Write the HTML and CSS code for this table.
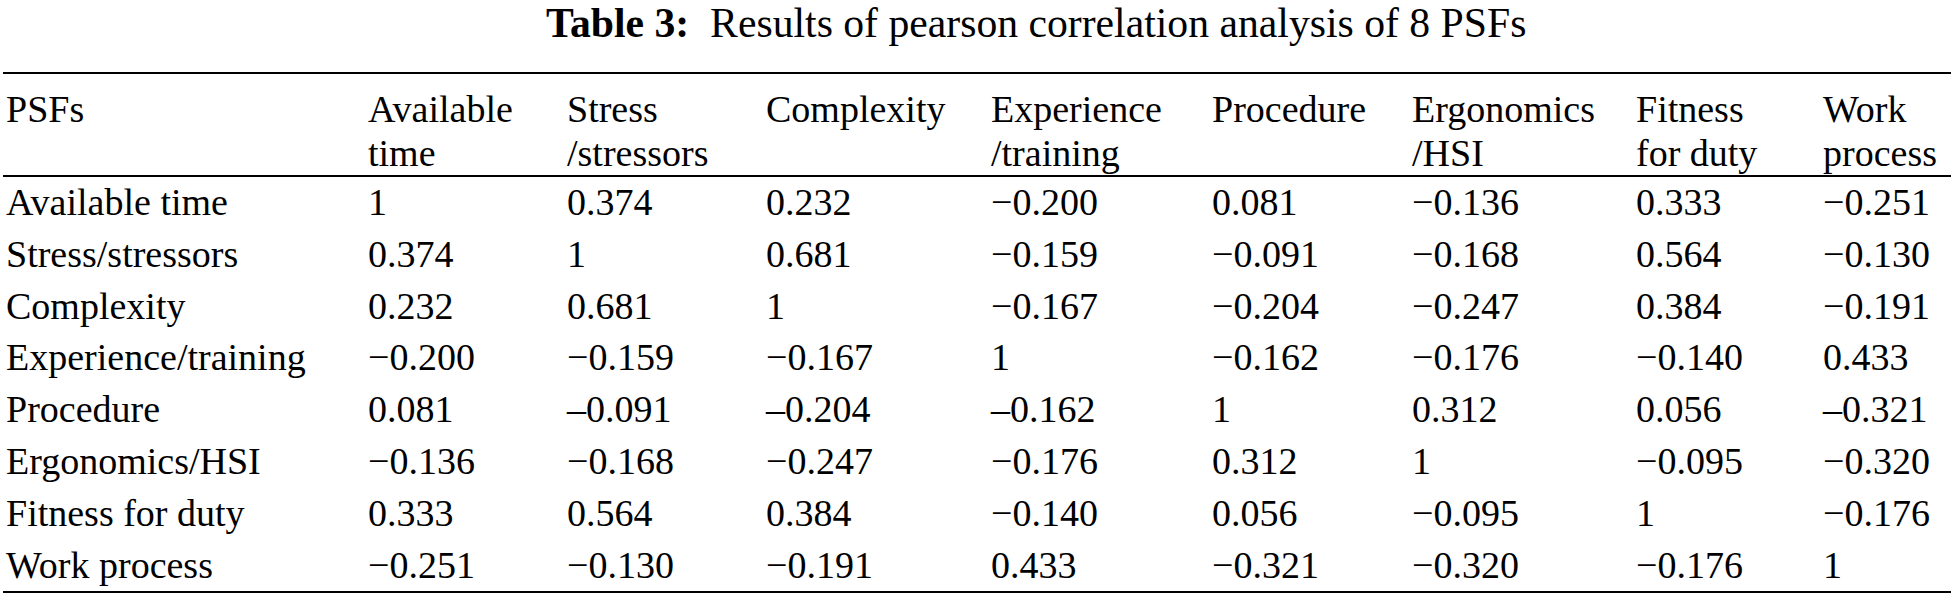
FILE: index.html
```html
<!DOCTYPE html>
<html lang="en">
<head>
<meta charset="utf-8">
<title>Table 3</title>
<link rel="stylesheet" href="styles.css">
</head>
<body>
<div class="caption"><span class="label">Table 3:</span>&nbsp; Results of pearson correlation analysis of 8 PSFs</div>
<div class="tbl">
  <div class="row head">
    <div>PSFs</div>
    <div>Available<br>time</div>
    <div>Stress<br>/stressors</div>
    <div>Complexity</div>
    <div>Experience<br>/training</div>
    <div>Procedure</div>
    <div>Ergonomics<br>/HSI</div>
    <div>Fitness<br>for duty</div>
    <div>Work<br>process</div>
  </div>
  <div class="body">
    <div class="row"><div>Available time</div><div>1</div><div>0.374</div><div>0.232</div><div>−0.200</div><div>0.081</div><div>−0.136</div><div>0.333</div><div>−0.251</div></div>
    <div class="row"><div>Stress/stressors</div><div>0.374</div><div>1</div><div>0.681</div><div>−0.159</div><div>−0.091</div><div>−0.168</div><div>0.564</div><div>−0.130</div></div>
    <div class="row"><div>Complexity</div><div>0.232</div><div>0.681</div><div>1</div><div>−0.167</div><div>−0.204</div><div>−0.247</div><div>0.384</div><div>−0.191</div></div>
    <div class="row"><div>Experience/training</div><div>−0.200</div><div>−0.159</div><div>−0.167</div><div>1</div><div>−0.162</div><div>−0.176</div><div>−0.140</div><div>0.433</div></div>
    <div class="row"><div>Procedure</div><div>0.081</div><div>–0.091</div><div>–0.204</div><div>–0.162</div><div>1</div><div>0.312</div><div>0.056</div><div>–0.321</div></div>
    <div class="row"><div>Ergonomics/HSI</div><div>−0.136</div><div>−0.168</div><div>−0.247</div><div>−0.176</div><div>0.312</div><div>1</div><div>−0.095</div><div>−0.320</div></div>
    <div class="row"><div>Fitness for duty</div><div>0.333</div><div>0.564</div><div>0.384</div><div>−0.140</div><div>0.056</div><div>−0.095</div><div>1</div><div>−0.176</div></div>
    <div class="row"><div>Work process</div><div>−0.251</div><div>−0.130</div><div>−0.191</div><div>0.433</div><div>−0.321</div><div>−0.320</div><div>−0.176</div><div>1</div></div>
  </div>
</div>
</body>
</html>
```
FILE: styles.css
```css
html, body {
  margin: 0;
  padding: 0;
  background: #fff;
}
body {
  font-family: "Liberation Serif", "Times New Roman", serif;
  color: #000;
  width: 1954px;
  height: 596px;
  overflow: hidden;
}
.caption {
  font-size: 41.7px;
  line-height: 46px;
  padding-left: 546px;
  margin-bottom: 26px;
  white-space: nowrap;
}
.caption .label {
  font-weight: bold;
}
.tbl {
  margin-left: 3px;
  width: 1948px;
  border-top: 2px solid #000;
  border-bottom: 2px solid #000;
  font-size: 38px;
}
.row {
  display: grid;
  grid-template-columns: 362px 199px 199px 225px 221px 200px 224px 187px 1fr;
  padding-left: 3px;
  line-height: 51.8px;
  white-space: nowrap;
}
.row.head {
  line-height: 44px;
  padding-top: 13px;
  border-bottom: 2px solid #000;
}
```
